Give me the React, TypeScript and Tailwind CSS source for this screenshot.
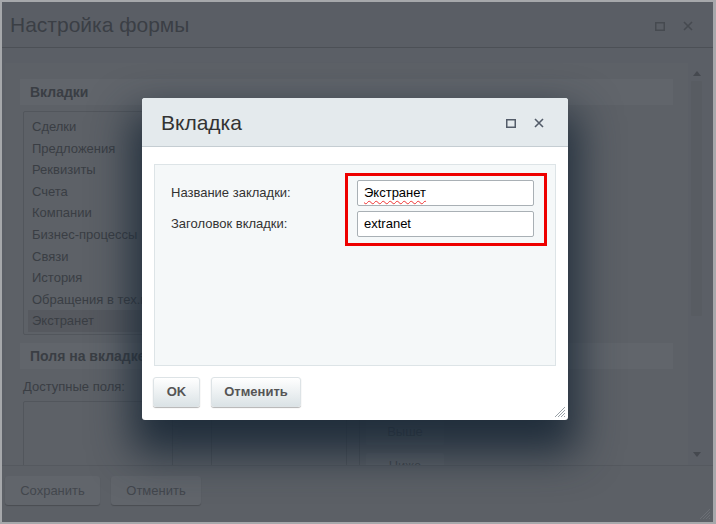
import React from "react";

const tabs = [
  "Сделки",
  "Предложения",
  "Реквизиты",
  "Счета",
  "Компании",
  "Бизнес-процессы",
  "Связи",
  "История",
  "Обращения в тех.поддержку",
  "Экстранет",
];

function SquareIcon({ color }: { color: string }) {
  return (
    <svg width="10" height="10" viewBox="0 0 10 10">
      <rect x="0.75" y="1.75" width="8.5" height="7.5" fill="none" stroke={color} strokeWidth="1.5" />
    </svg>
  );
}

function CloseIcon({ color }: { color: string }) {
  return (
    <svg width="10" height="10" viewBox="0 0 10 10">
      <path d="M1 1 L9 9 M9 1 L1 9" stroke={color} strokeWidth="1.6" />
    </svg>
  );
}

function ResizeGrip({ color }: { color: string }) {
  return (
    <svg width="12" height="12" viewBox="0 0 12 12">
      <path d="M11 1 L1 11 M11 4 L4 11 M11 7 L7 11 M11 10 L10 11" stroke={color} strokeWidth="1" />
    </svg>
  );
}

function Arrow({ up }: { up?: boolean }) {
  return (
    <svg width="8" height="5" viewBox="0 0 8 5">
      <path d={up ? "M0 5 L4 0 L8 5 Z" : "M0 0 L4 5 L8 0 Z"} fill="#45494f" />
    </svg>
  );
}

export default function App() {
  const font = { fontFamily: '"Liberation Sans", Arial, sans-serif' };
  return (
    <div className="relative w-[716px] h-[524px] overflow-hidden" style={font}>
      {/* dimmed settings window underneath */}
      <div className="w-full h-full flex flex-col border-l-2 border-t-2 border-r-[3px] border-b-2 border-[#a6a8ab] bg-[#5b5f66]">
        <div className="h-[46px] shrink-0 flex items-center justify-between pl-[8px] pr-[20px] border-b border-[#4c5056] bg-[#5a5e65]">
          <span className="text-[21px] text-[#3b3f45] leading-none">Настройка формы</span>
          <div className="flex items-center gap-[18px] pt-[2px]">
            <SquareIcon color="#464a50" />
            <CloseIcon color="#464a50" />
          </div>
        </div>

        <div className="h-[417px] shrink-0 flex overflow-hidden pt-[15px] pl-[3px]">
          <div className="w-[683px] shrink-0 bg-[#5d6167] px-[15px] pt-[16px]">
            <div className="h-[26px] w-[653px] bg-[#61656b] flex items-center pl-[10px]">
              <span className="text-[14px] font-bold text-[#3a3e44]">Вкладки</span>
            </div>
            <div className="mt-[6px] ml-[3px] w-[230px] h-[224px] border border-[#52565c] rounded-[2px] pt-[4px] pl-[4px] overflow-hidden">
              {tabs.map((t, i) => (
                <div
                  key={t}
                  className={`h-[21.6px] flex items-center pl-[4px] text-[13px] whitespace-nowrap text-[#3a3e44] ${
                    i === tabs.length - 1 ? "bg-[#56595f]" : ""
                  }`}
                >
                  {t}
                </div>
              ))}
            </div>
            <div className="mt-[8px] h-[26px] w-[653px] bg-[#61656b] flex items-center pl-[10px]">
              <span className="text-[14px] font-bold text-[#3a3e44]">Поля на вкладке</span>
            </div>
            <div className="mt-[8px] ml-[3px] text-[13px] text-[#3a3e44]">Доступные поля:</div>
            <div className="mt-[4px] ml-[3px] flex">
              <div className="w-[150px] h-[90px] border border-[#52565c] rounded-[2px]" />
              <div className="w-[38px] h-[90px] flex flex-col items-center justify-end pb-[10px]">
                <span className="text-[10px] text-[#45494f]">›</span>
              </div>
              <div className="w-[136px] h-[90px] border border-[#52565c] rounded-[2px]" />
              <div className="ml-[12px] w-[140px] h-[90px] border-l border-[#52565c] pl-[6px] pt-[18px] flex flex-col gap-[8px]">
                <div className="w-[78px] h-[26px] bg-[#61656b] rounded-[2px] flex items-center justify-center text-[13px] text-[#45494f]">Выше</div>
                <div className="w-[78px] h-[26px] bg-[#61656b] rounded-[2px] flex items-center justify-center text-[13px] text-[#45494f]">Ниже</div>
              </div>
            </div>
          </div>
          <div className="w-[13px] shrink-0 ml-[2px] flex flex-col items-center pt-[8px]">
            <Arrow up />
            <div className="mt-[5px] w-[11px] h-[235px] bg-[#585c62] rounded-[1px]" />
            <div className="flex-1" />
            <div className="mb-[8px]">
              <Arrow />
            </div>
          </div>
        </div>

        <div className="flex-1 border-t border-[#55595f] bg-[#5c6066] relative flex items-start gap-[11px] pl-[3px] pt-[10px]">
          <div className="w-[95px] h-[29px] rounded-[3px] bg-[#61656b] shadow-[0_1px_1px_rgba(0,0,0,0.2)] flex items-center justify-center text-[13px] text-[#43474d]">
            Сохранить
          </div>
          <div className="w-[90px] h-[29px] rounded-[3px] bg-[#61656b] shadow-[0_1px_1px_rgba(0,0,0,0.2)] flex items-center justify-center text-[13px] text-[#43474d]">
            Отменить
          </div>
          <div className="absolute right-[2px] bottom-[2px]">
            <ResizeGrip color="#6b6f75" />
          </div>
        </div>
      </div>

      {/* tab dialog */}
      <div className="absolute left-[142px] top-[98px] w-[426px] h-[322px] bg-white rounded-[3px] flex flex-col shadow-[0_24px_42px_10px_rgba(26,40,54,0.9)]">
        <div className="h-[49px] shrink-0 bg-[#e4eaed] border-b border-[#c5cdd2] rounded-t-[3px] flex items-center justify-between pl-[19px] pr-[24px]">
          <span className="text-[21px] text-[#333] leading-none">Вкладка</span>
          <div className="flex items-center gap-[18px] pt-[2px]">
            <SquareIcon color="#535c69" />
            <CloseIcon color="#535c69" />
          </div>
        </div>
        <div className="mt-[17px] mx-[12px] h-[202px] bg-[#f5f8f9] border border-[#dde4e7] pt-[8px] pl-[16px] flex">
          <div className="w-[174px] pt-[7px] flex flex-col gap-[5px]">
            <div className="h-[26px] flex items-center text-[13px] text-[#333]">Название закладки:</div>
            <div className="h-[26px] flex items-center text-[13px] text-[#333]">Заголовок вкладки:</div>
          </div>
          <div className="w-[202px] h-[73px] border-[3px] border-[#ee0000] pt-[4px] pl-[9px] pr-[10px] flex flex-col gap-[5px]">
            <div className="h-[26px] border border-[#a9b0b5] rounded-[2px] bg-white flex items-center pl-[6px] text-[13px] text-black">
              <span className="underline decoration-wavy decoration-[#e33] decoration-1 underline-offset-[3px]">Экстранет</span>
            </div>
            <div className="h-[26px] border border-[#a9b0b5] rounded-[2px] bg-white flex items-center pl-[6px] text-[13px] text-black">
              extranet
            </div>
          </div>
        </div>
        <div className="mt-[11px] pl-[11px] flex gap-[11px] relative flex-1">
          <div className="w-[47px] h-[30px] rounded-[3px] bg-gradient-to-b from-white to-[#dbe3e6] shadow-[0_1px_1px_rgba(0,0,0,0.3)] border border-[#dde3e6] flex items-center justify-center text-[13px] font-bold text-[#555]">
            OK
          </div>
          <div className="w-[90px] h-[30px] rounded-[3px] bg-gradient-to-b from-white to-[#dbe3e6] shadow-[0_1px_1px_rgba(0,0,0,0.3)] border border-[#dde3e6] flex items-center justify-center text-[13px] font-bold text-[#555]">
            Отменить
          </div>
          <div className="absolute right-[2px] bottom-[2px]">
            <ResizeGrip color="#9aa2a8" />
          </div>
        </div>
      </div>
    </div>
  );
}
